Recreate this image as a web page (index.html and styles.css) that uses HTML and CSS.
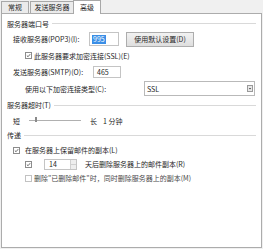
FILE: index.html
```html
<!DOCTYPE html>
<html lang="zh-CN">
<head>
  <meta charset="UTF-8" />
  <title>高级</title>
  <link rel="stylesheet" href="styles.css">
</head>
<body>
  <div class="tabs">
    <div class="tab t1">常规</div>
    <div class="tab t2">发送服务器</div>
    <div class="tab t3 active">高级</div>
  </div>

  <div class="panel">
    <div class="group h15">服务器端口号</div>

    <div class="row h16 in1">
      <span class="label w-pop">接收服务器(POP3)(I):</span>
      <span class="field f-pop"><span class="sel">995</span></span>
      <span class="btn">使用默认设置(D)</span>
    </div>

    <div class="row h17 in2">
      <span class="check on"><svg viewBox="0 0 7 7"><path d="M1.2 3.6 L2.9 5.2 L5.9 1.6" /></svg></span>
      <span>此服务器要求加密连接(SSL)(E)</span>
    </div>

    <div class="row h16 in1">
      <span class="label w-smtp">发送服务器(SMTP)(O):</span>
      <span class="field f-smtp">465</span>
    </div>

    <div class="row h17 in2">
      <span class="label w-enc">使用以下加密连接类型(C):</span>
      <span class="select">
        <span>SSL</span>
        <span class="arrow"><svg viewBox="0 0 5 5"><path d="M1 2 L4 2 L2.5 3.6 Z" /></svg></span>
      </span>
    </div>

    <div class="group h16">服务器超时(T)</div>

    <div class="row h15 in1">
      <span class="short">短</span>
      <span class="slider"><span class="thumb"></span></span>
      <span class="long">长</span>
      <span>1 分钟</span>
    </div>

    <div class="group h14">传递</div>

    <div class="row h16 in1">
      <span class="check on"><svg viewBox="0 0 7 7"><path d="M1.2 3.6 L2.9 5.2 L5.9 1.6" /></svg></span>
      <span class="gap">在服务器上保留邮件的副本(L)</span>
    </div>

    <div class="row h12 in2">
      <span class="check on"><svg viewBox="0 0 7 7"><path d="M1.2 3.6 L2.9 5.2 L5.9 1.6" /></svg></span>
      <span class="spin">
        <span>14</span>
        <span class="spin-btns"><i class="up"></i><i class="down"></i></span>
      </span>
      <span>天后删除服务器上的邮件副本(R)</span>
    </div>

    <div class="row h16 in2">
      <span class="check off"></span>
      <span class="dim">删除"已删除邮件"时，同时删除服务器上的副本(M)</span>
    </div>
  </div>
</body>
</html>
```

FILE: styles.css
```css
* { box-sizing: border-box; margin: 0; padding: 0; }
body {
  font-family: "Noto Sans CJK SC", "Microsoft YaHei", sans-serif;
  font-size: 7px;
  color: #262626;
  background: #f0f0f0;
  height: 249px;
  overflow: hidden;
}
.tabs {
  display: flex;
  align-items: flex-end;
  height: 13px;
  padding-left: 1px;
}
.tab {
  height: 12px;
  line-height: 11px;
  text-align: center;
  border: 1px solid #a8a8a8;
  border-bottom: none;
  background: #ebebeb;
  white-space: nowrap;
}
.t1 { width: 28px; }
.t2 { width: 44px; margin-left: 1px; }
.t3 { width: 28px; margin-left: -1px; }
.tab.active {
  height: 14px;
  line-height: 13px;
  background: #fff;
  margin-bottom: -1px;
  position: relative;
  z-index: 1;
}
.panel {
  height: 235px;
  margin: 0 1px 1px 1px;
  border: 1px solid #acacac;
  background: #fff;
  padding: 2px 5px 0 5px;
}
.group {
  display: flex;
  align-items: center;
  white-space: nowrap;
}
.group::after {
  content: "";
  flex: 1;
  border-top: 1px solid #d9d9d9;
  margin-left: 3px;
}
.row {
  display: flex;
  align-items: center;
  white-space: nowrap;
}
.h12 { height: 12px; }
.h14 { height: 14px; }
.h15 { height: 15px; }
.h16 { height: 16px; }
.h17 { height: 17px; }
.in1 { padding-left: 6px; }
.in2 { padding-left: 18px; }

.label { display: inline-block; }
.w-pop { width: 76px; }
.w-smtp { width: 80px; }
.w-enc { width: 119px; }

.field {
  display: flex;
  align-items: center;
  border: 1px solid #c4c4c4;
  background: #fff;
  padding-left: 2px;
}
.f-pop { width: 30px; height: 14px; }
.f-smtp { width: 28px; height: 12px; padding-left: 3px; }
.sel {
  background: #3a8ee6;
  color: #fff;
  padding: 0 1px;
  line-height: 9px;
}
.btn {
  width: 68px;
  height: 15px;
  margin-left: 7px;
  border: 1px solid #adadad;
  background: linear-gradient(#f2f2f2, #dedede);
  display: flex;
  align-items: center;
  justify-content: center;
}

.check {
  width: 7px;
  height: 7px;
  border: 1px solid #8c8c8c;
  background: #fff;
  margin-right: 2px;
  display: inline-flex;
}
.check svg { width: 5px; height: 5px; }
.check path { fill: none; stroke: #333; stroke-width: 1; }
.check.off { border-color: #c2c2c2; }
.gap { margin-left: 3px; }
.dim { color: #4a4a4a; }

.select {
  width: 111px;
  height: 15px;
  border: 1px solid #b9b9b9;
  background: #fff;
  display: flex;
  align-items: center;
  justify-content: space-between;
  padding: 0 1px 0 2px;
}
.arrow {
  width: 6px;
  height: 7px;
  border: 1px solid #9a9a9a;
  background: #e8e8e8;
  display: flex;
  align-items: center;
  justify-content: center;
}
.arrow svg { width: 5px; height: 5px; }
.arrow path { fill: #444; }

.short { width: 16px; }
.slider {
  width: 52px;
  height: 1px;
  background: #b0b0b0;
  position: relative;
}
.thumb {
  position: absolute;
  left: 6px;
  top: -3px;
  width: 2px;
  height: 5px;
  background: #8a8a8a;
}
.long { margin-left: 9px; width: 13px; }

.spin {
  width: 33px;
  height: 11px;
  margin-left: 10px;
  margin-right: 8px;
  border: 1px solid #c4c4c4;
  display: flex;
  align-items: center;
  justify-content: space-between;
  padding-left: 4px;
}
.spin-btns {
  width: 6px;
  height: 9px;
  display: flex;
  flex-direction: column;
  border-left: 1px solid #d0d0d0;
}
.spin-btns i {
  flex: 1;
  background: #eee;
}
.spin-btns .up { border-bottom: 1px solid #d0d0d0; }
```
